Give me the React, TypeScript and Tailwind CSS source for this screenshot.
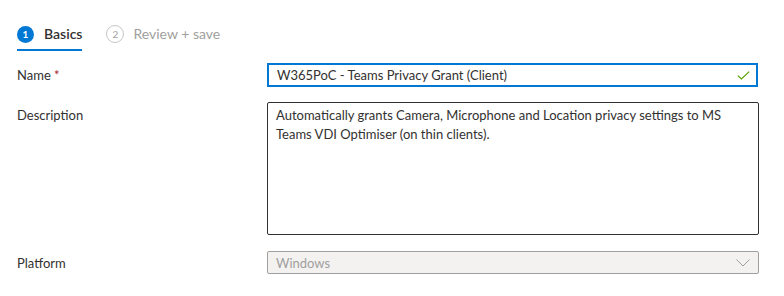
import React from "react";

export default function App() {
  return (
    <div
      className="w-[784px] h-[296px] bg-white text-[#323130] text-[13px] overflow-hidden"
      style={{ fontFamily: '"Segoe UI", Lato, sans-serif' }}
    >
      <div className="flex items-start pl-[17px] pt-[25px] gap-[24px]">
        <div className="flex flex-col">
          <div className="flex items-center gap-[10px] h-[18px]">
            <div className="w-[17px] h-[17px] rounded-full bg-[#0078d4] text-white text-[10px] font-bold flex items-center justify-center">
              1
            </div>
            <span className="font-semibold text-[14px] leading-[18px]">Basics</span>
          </div>
          <div className="h-[2px] bg-[#0078d4] mt-[6px]" />
        </div>
        <div className="flex items-center gap-[9px] h-[18px]">
          <div className="w-[18px] h-[18px] rounded-full border border-[#c8c6c4] text-[#a19f9d] text-[10px] flex items-center justify-center">
            2
          </div>
          <span className="text-[#a19f9d] text-[14px] leading-[18px]">Review + save</span>
        </div>
      </div>

      <div className="flex flex-col pl-[17px] mt-[12px]">
        <div className="flex items-center">
          <div className="w-[250px] leading-[20px]">
            Name <span className="text-[#a4262c]">*</span>
          </div>
          <div className="w-[491px] h-[24px] border-2 border-[#0078d4] flex items-center pl-[8px] pr-[6px]">
            <span className="flex-1 leading-[20px]">W365PoC - Teams Privacy Grant (Client)</span>
            <svg width="13" height="9" viewBox="0 0 13 9" fill="none">
              <path d="M0.8 4.6 L4.4 8 L12.2 0.6" stroke="#57a300" strokeWidth="1.2" />
            </svg>
          </div>
        </div>

        <div className="flex items-start mt-[15px]">
          <div className="w-[250px] leading-[20px] pt-[3px]">Description</div>
          <div className="w-[492px] h-[133px] border border-[#323130] rounded-[2px] px-[8px] pt-[3px] leading-[19px]">
            Automatically grants Camera, Microphone and Location privacy settings to MS
            Teams VDI Optimiser (on thin clients).
          </div>
        </div>

        <div className="flex items-center mt-[16px]">
          <div className="w-[250px] leading-[20px]">Platform</div>
          <div className="w-[492px] h-[23px] border border-[#a19f9d] rounded-[2px] bg-[#f3f2f1] flex items-center pl-[8px] pr-[8px]">
            <span className="flex-1 text-[#a19f9d] leading-[20px]">Windows</span>
            <svg width="14" height="8" viewBox="0 0 14 8" fill="none">
              <path d="M0.5 0.5 L7 7 L13.5 0.5" stroke="#a19f9d" strokeWidth="1" />
            </svg>
          </div>
        </div>
      </div>
    </div>
  );
}
